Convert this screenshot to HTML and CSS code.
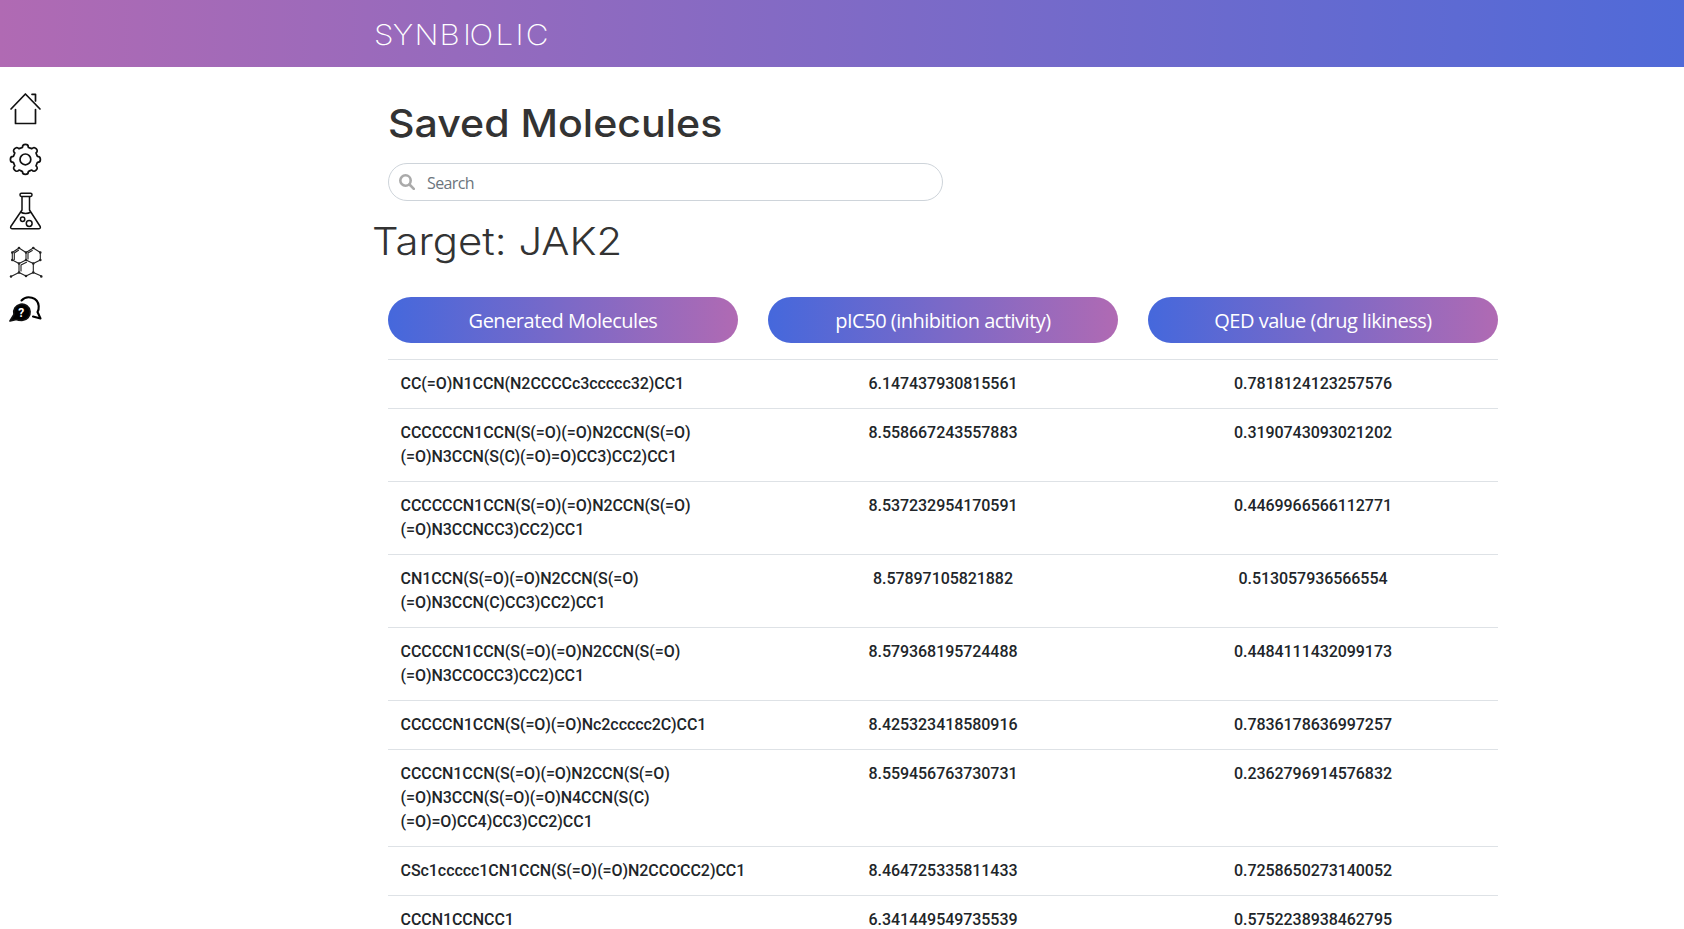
FILE: index.html
```html
<!DOCTYPE html>
<html lang="en">
<head>
<meta charset="utf-8">
<title>Synbiolic</title>
<link rel="stylesheet" href="styles.css">
</head>
<body>
<header class="topbar">
  <svg class="logo" width="180" height="28" viewBox="0 0 180 28"><text transform="scale(1.12 1)" y="24" x="0 16.700 36.200 58.500 79.500 85.300 108.500 126.300 135.500">SYNBIOLIC</text></svg>
</header>
<div class="layout">
  <nav class="sidebar">
    <svg class="icon" width="36" height="36" viewBox="7 90 36 36"><path d="M11 109 25.4 94 40 109M15.5 109.500V123.500H35.500V109.500M32 94.300H35.500V101"/></svg>
    <svg class="icon" width="36" height="36" viewBox="-18.400 -18.400 36 36"><circle r="5.400"/><path d="M-3-12C-3-14.500-2-15 0-15S3-14.500 3-12C4-11.500 5-11.200 6.400-10.600C8-12.500 9.500-12 10.700-10.700S12.500-8 10.600-6.400C11.200-5 11.500-4 12-3C14.500-3 15-2 15 0S14.500 3 12 3C11.500 4 11.200 5 10.600 6.400C12.500 8 12 9.500 10.700 10.700S8 12.500 6.400 10.600C5 11.200 4 11.500 3 12C3 14.500 2 15 0 15S-3 14.500-3 12C-4 11.500-5 11.200-6.400 10.600C-8 12.500-9.500 12-10.700 10.700S-12.500 8-10.600 6.400C-11.200 5-11.500 4-12 3C-14.500 3-15 2-15 0S-14.500-3-12-3C-11.500-4-11.200-5-10.600-6.400C-12.500-8-12-9.500-10.700-10.700S-8-12.500-6.400-10.600C-5-11.200-4-11.500-3-12Z"/></svg>
    <svg class="icon flask" width="36" height="40" viewBox="7 191 36 40"><rect x="20" y="193.300" width="12" height="3.200" rx="1.400"/><path d="M22 197V210L10.800 226.500Q10 228.700 12.500 228.700H38.500Q41 228.700 40.200 226.500L29.500 210V197M20.500 212Q25.500 215 31 212"/><circle cx="22.600" cy="219.300" r="2.200"/><circle cx="29.200" cy="223.500" r="2.900"/></svg>
    <svg class="icon molecule" width="36" height="36" viewBox="7 244 36 36"><path d="M19 248 12.300 252.500V260L19 263.500 26 260V252.500ZM33.300 248 26 252.500M26 260 33.300 263.500 40.300 260V252.500L33.300 248M19 263.500V272.500L26 276 33.300 272.500V263.500M19 272.500 12 276M33.300 272.500 41.300 276M14.300 253.500V259.500M18.500 250.200 14.300 253M32.300 250.500 28 253V259M21 271V265L26.500 262.300"/><path class="atoms" d="M19 248h0M12.300 252.500h0M12.300 260h0M19 263.500h0M26 252.500h0M26 260h0M33.300 248h0M40.300 252.500h0M40.300 260h0M33.300 263.500h0M19 272.500h0M26 276h0M33.300 272.500h0M11 276.500h0M41.300 276.500h0"/></svg>
    <svg class="icon chat" width="36" height="32" viewBox="7 294 36 32"><path class="solid" d="M10 321 14 314.500A8.200 8.200 0 1 1 22 320.500Q18 320.500 16.500 319.500Z"/><path class="outline" d="M21.500 300.500C27 294.500 38 297.500 38.700 306Q39 309.500 37.500 312L40.500 318.500 33 316.500"/><text x="18.300" y="317">?</text></svg>
  </nav>
  <main class="content">
    <h1 class="title"><span class="wide">Saved Molecules</span></h1>
    <div class="search">
      <svg class="lens" width="16" height="16" viewBox="0 0 16 16"><circle cx="6.500" cy="6.500" r="5.200"/><path d="M10.500 10.500 14.800 14.800"/></svg>
      <span class="placeholder">Search</span>
    </div>
    <h2 class="target"><span class="wide">Target: JAK2</span></h2>
    <div class="pills">
      <div class="pill">Generated Molecules</div>
      <div class="pill">pIC50 (inhibition activity)</div>
      <div class="pill">QED value (drug likiness)</div>
    </div>
    <div class="table">
      <div class="row"><div>CC(=O)N1CCN(N2CCCCc3ccccc32)CC1</div><div>6.147437930815561</div><div>0.7818124123257576</div></div>
      <div class="row"><div>CCCCCCN1CCN(S(=O)(=O)N2CCN(S(=O)<br>(=O)N3CCN(S(C)(=O)=O)CC3)CC2)CC1</div><div>8.558667243557883</div><div>0.3190743093021202</div></div>
      <div class="row"><div>CCCCCCN1CCN(S(=O)(=O)N2CCN(S(=O)<br>(=O)N3CCNCC3)CC2)CC1</div><div>8.537232954170591</div><div>0.4469966566112771</div></div>
      <div class="row"><div>CN1CCN(S(=O)(=O)N2CCN(S(=O)<br>(=O)N3CCN(C)CC3)CC2)CC1</div><div>8.57897105821882</div><div>0.513057936566554</div></div>
      <div class="row"><div>CCCCCN1CCN(S(=O)(=O)N2CCN(S(=O)<br>(=O)N3CCOCC3)CC2)CC1</div><div>8.579368195724488</div><div>0.4484111432099173</div></div>
      <div class="row"><div>CCCCCN1CCN(S(=O)(=O)Nc2ccccc2C)CC1</div><div>8.425323418580916</div><div>0.7836178636997257</div></div>
      <div class="row"><div>CCCCN1CCN(S(=O)(=O)N2CCN(S(=O)<br>(=O)N3CCN(S(=O)(=O)N4CCN(S(C)<br>(=O)=O)CC4)CC3)CC2)CC1</div><div>8.559456763730731</div><div>0.2362796914576832</div></div>
      <div class="row"><div>CSc1ccccc1CN1CCN(S(=O)(=O)N2CCOCC2)CC1</div><div>8.464725335811433</div><div>0.7258650273140052</div></div>
      <div class="row"><div>CCCN1CCNCC1</div><div>6.341449549735539</div><div>0.5752238938462795</div></div>
    </div>
  </main>
</div>
</body>
</html>
```
FILE: styles.css
```css
* { box-sizing: border-box; }
html, body { height: 100%; }
body { margin: 0; height: 929px; display: flex; flex-direction: column; overflow: hidden; background: #fff; color: #212529; font: 500 16px/24px Roboto, sans-serif; }
.topbar { flex: none; height: 67px; padding: 21px 0 0 374px; background: linear-gradient(to right, #b06ab3, #506ad8); }
.logo { display: block; overflow: visible; }
.logo text { font: 250 28px Inter, sans-serif; fill: #fff; }
.layout { flex: 1; min-height: 0; display: flex; overflow: hidden; }
.sidebar { flex: none; width: 388px; padding: 23px 0 0 7px; display: flex; flex-direction: column; align-items: flex-start; }
.icon { fill: none; stroke: #111; stroke-width: 1.7; stroke-linecap: round; stroke-linejoin: round; }
.icon + .icon { margin-top: 15px; }
.icon.flask { margin-top: 14px; stroke-width: 1.5; }
.icon.molecule { margin-top: 13px; stroke: #222; stroke-width: 1.1; }
.molecule .atoms { stroke-width: 2.6; }
.icon.chat { margin-top: 14px; }
.chat .solid { fill: #000; }
.chat .outline { stroke: #000; stroke-width: 2.1; }
.chat text { font: 700 12px Roboto, sans-serif; fill: #fff; stroke: none; }
.content { width: 1110px; padding-top: 32px; }
.title, .target { margin: 0; color: #333; font: 500 38.5px/48px Inter, sans-serif; white-space: nowrap; }
.wide { display: inline-block; transform: scaleX(1.067); transform-origin: left; }
.target .wide { transform: scaleX(1.087); }
.search { margin-top: 16px; width: 555px; height: 38px; border: 1px solid #ced4da; border-radius: 19px; padding: 0 10px; display: flex; align-items: center; gap: 12px; }
.lens { fill: none; stroke: #aaa; stroke-width: 2.6; stroke-linecap: round; }
.placeholder { padding-top: 1px; color: #6c757d; font: 400 16px/24px "Open Sans", sans-serif; letter-spacing: -0.6px; }
.target { margin: 16px 0 0 -16px; font-weight: 300; }
.pills { margin-top: 32px; display: flex; gap: 30px; }
.pill { flex: 1; height: 46px; border-radius: 23px; background: linear-gradient(to right, #4568dc, #b06ab3); color: #fff; text-align: center; font: 400 20px/47px "Open Sans", sans-serif; letter-spacing: -0.5px; }
.table { margin-top: 16px; }
.row { display: grid; grid-template-columns: repeat(3, 370px); border-top: 1px solid #dee2e6; }
.row > div { padding: 12px; text-align: center; letter-spacing: -0.06px; }
.row > div:first-child { padding-left: 12.5px; text-align: left; white-space: nowrap; }
```
